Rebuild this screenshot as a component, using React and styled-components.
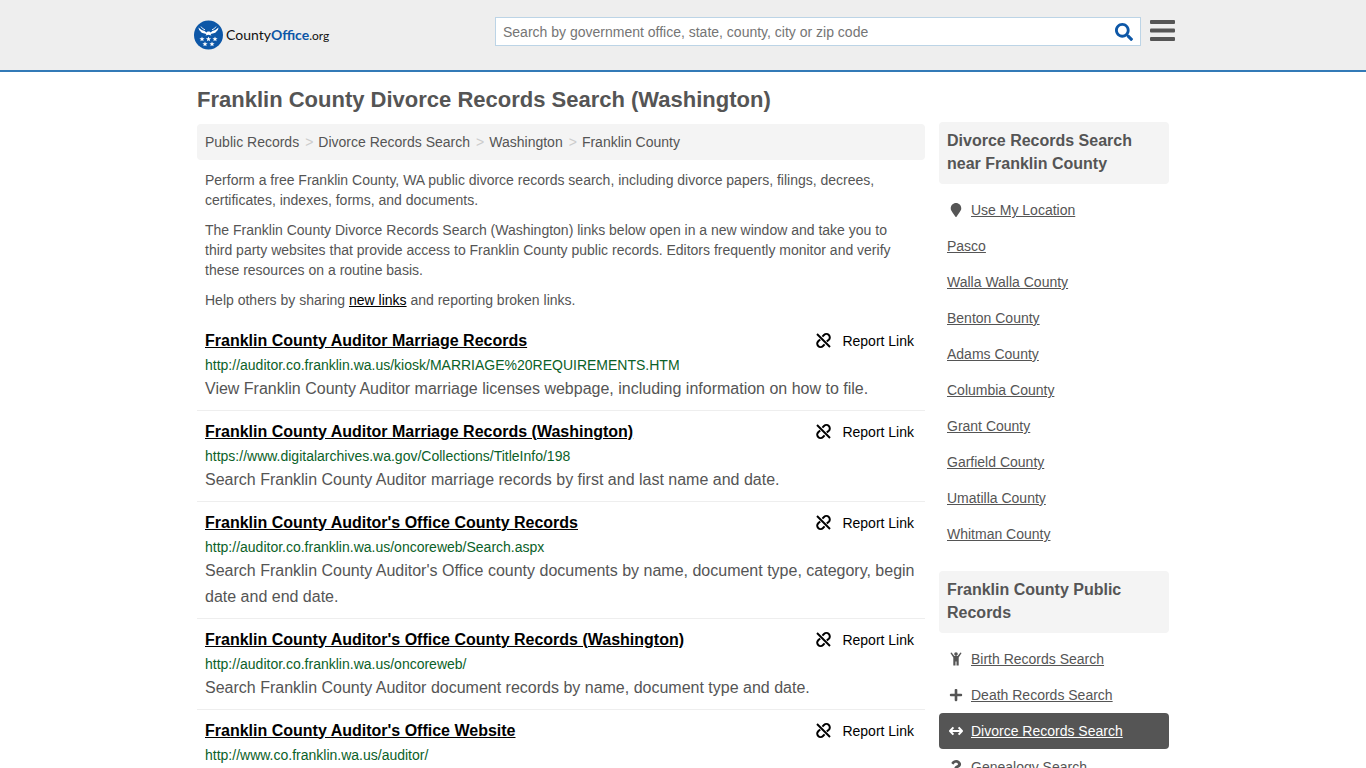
import React from 'react';
import styled, { createGlobalStyle } from 'styled-components';
import { useState } from 'react';
import { FaSearch, FaMapMarker, FaPlus, FaQuestion } from 'react-icons/fa';

const GlobalStyle = createGlobalStyle`
    * {
        box-sizing: border-box;
    }
    body {
        margin: 0;
        background-color: white;
        color: #555;
        font-family: Arial, "Liberation Sans", sans-serif;
        font-size: 14px;
        line-height: 20px;
    }
`;

const Header = styled.header`
    background-color: #eee;
    border-bottom: 2px solid #337ab7;
`;

const HeaderInner = styled.div`
    max-width: 984px;
    height: 70px;
    margin: 0 auto;
    padding-left: 3px;
    display: flex;
    align-items: flex-start;
    justify-content: space-between;
`;

const Logo = styled.a`
    display: flex;
    align-items: center;
    height: 70px;
    gap: 3px;
    color: #111;
    font-family: Lato, sans-serif;
    font-size: 14px;
    text-decoration: none;
`;

const LogoBlue = styled.b`
    color: #0d57a7;
`;

const LogoSmall = styled.span`
    font-size: 12px;
`;

const HeaderRight = styled.div`
    display: flex;
    align-items: center;
    gap: 9px;
    width: 680px;
    margin-top: 17px;
`;

const SearchForm = styled.form`
    flex: 1;
    display: flex;
    height: 29px;
    background-color: white;
    border: 1px solid #bcd4e6;
`;

const SearchInput = styled.input`
    flex: 1;
    padding: 0 7px;
    border: none;
    outline: none;
    background: none;
    font-family: inherit;
    font-size: 14px;
    color: #555;
    &::placeholder {
        color: #757575;
    }
`;

const IconButton = styled.button`
    display: flex;
    align-items: center;
    padding: ${(props) => props.$pad || "0"};
    border: none;
    background: none;
    color: ${(props) => props.$color};
    cursor: pointer;
`;

const Container = styled.div`
    max-width: 972px;
    margin: 0 auto;
`;

const Title = styled.h1`
    margin: 0;
    padding: 16px 0 12px;
    font-size: 22px;
    line-height: 24px;
`;

const Columns = styled.div`
    display: flex;
    align-items: flex-start;
    gap: 14px;
`;

const Main = styled.main`
    flex: 1;
`;

const Breadcrumb = styled.nav`
    display: flex;
    gap: 5px;
    padding: 8px;
    border-radius: 4px;
    background-color: #f4f4f4;
`;

const Crumb = styled.a`
    color: #555;
    text-decoration: none;
`;

const Separator = styled.span`
    padding-left: 1px;
    color: #ccc;
`;

const Text = styled.p`
    margin: 10px 0;
    padding: 0 8px;
`;

const DarkLink = styled.a`
    color: black;
`;

const Item = styled.article`
    padding: 8px;
    border-bottom: 1px solid #eee;
`;

const ItemTop = styled.div`
    display: flex;
    align-items: center;
    justify-content: space-between;
    height: 25px;
    padding-right: 3px;
`;

const ItemTitle = styled.a`
    color: black;
    font-size: 16px;
    font-weight: bold;
`;

const Report = styled.a`
    display: flex;
    align-items: center;
    gap: 11px;
    color: black;
    text-decoration: none;
`;

const Url = styled.div`
    padding-top: 1px;
    color: #0b6128;
    line-height: 22px;
`;

const Description = styled.div`
    font-size: 16px;
    line-height: 26px;
`;

const Sidebar = styled.aside`
    width: 230px;
    margin-top: -2px;
`;

const SideTitle = styled.h2`
    margin: 0 0 8px;
    padding: 7px 8px 9px;
    border-radius: 4px;
    background-color: #f4f4f4;
    font-size: 16px;
    line-height: 23px;
`;

const SideList = styled.div`
    margin-bottom: 19px;
`;

const SideLink = styled.a`
    display: flex;
    align-items: center;
    gap: 6px;
    padding: 8px;
    border-radius: 4px;
    color: ${(props) => (props.$active ? "white" : "#555")};
    background-color: ${(props) => (props.$active ? "#555" : "transparent")};
`;

const SideIcon = styled.span`
    display: flex;
    justify-content: center;
    width: 18px;
`;

const ChildIcon = () => (
    <svg width="12" height="14" viewBox="0 0 12 14" fill="currentColor" aria-hidden="true">
        <circle cx="6" cy="2.1" r="1.8" />
        <path d="M.4 1.1L1.6.4L4.3 3.9H7.7L10.4.4L11.6 1.1L8.7 5.6V13.4H6.5V9.6H5.5V13.4H3.3V5.6Z" />
    </svg>
);

const ArrowsIcon = () => (
    <svg width="16" height="10" viewBox="0 0 16 10" fill="none" stroke="currentColor" strokeWidth="2" aria-hidden="true">
        <path d="M2 5H14M5.4 1.4L2 5L5.4 8.6M10.6 1.4L14 5L10.6 8.6" strokeLinejoin="round" />
    </svg>
);

const UnlinkIcon = () => (
    <svg width="15" height="15" viewBox="0 0 15 15" fill="none" stroke="currentColor" strokeWidth="2" aria-hidden="true">
        <path d="M1 1L14 14" />
        <path d="M6.4 3.6L8 2A3.3 3.3 0 0 1 12.8 6.8L10.8 8.6" />
        <path d="M8.6 11.4L7 13A3.3 3.3 0 0 1 2.2 8.2L4.2 6.4" />
    </svg>
);

const links = [
    {
        title: "Franklin County Auditor Marriage Records",
        url: "http://auditor.co.franklin.wa.us/kiosk/MARRIAGE%20REQUIREMENTS.HTM",
        desc: "View Franklin County Auditor marriage licenses webpage, including information on how to file.",
    },
    {
        title: "Franklin County Auditor Marriage Records (Washington)",
        url: "https://www.digitalarchives.wa.gov/Collections/TitleInfo/198",
        desc: "Search Franklin County Auditor marriage records by first and last name and date.",
    },
    {
        title: "Franklin County Auditor's Office County Records",
        url: "http://auditor.co.franklin.wa.us/oncoreweb/Search.aspx",
        desc: "Search Franklin County Auditor's Office county documents by name, document type, category, begin date and end date.",
    },
    {
        title: "Franklin County Auditor's Office County Records (Washington)",
        url: "http://auditor.co.franklin.wa.us/oncoreweb/",
        desc: "Search Franklin County Auditor document records by name, document type and date.",
    },
    {
        title: "Franklin County Auditor's Office Website",
        url: "http://www.co.franklin.wa.us/auditor/",
    },
];

const places = [
    "Pasco",
    "Walla Walla County",
    "Benton County",
    "Adams County",
    "Columbia County",
    "Grant County",
    "Garfield County",
    "Umatilla County",
    "Whitman County",
];

const records = [
    { name: "Birth Records Search", icon: <ChildIcon /> },
    { name: "Death Records Search", icon: <FaPlus size={14} /> },
    { name: "Divorce Records Search", icon: <ArrowsIcon />, active: true },
    { name: "Genealogy Search", icon: <FaQuestion size={14} /> },
];

const star = "M0 -2.6L.7 -.8L2.6 -.8L1.1 .4L1.6 2.3L0 1.2L-1.6 2.3L-1.1 .4L-2.6 -.8L-.7 -.8Z";
const stars = [[8, 19], [14.5, 19], [21, 19], [11, 24], [18, 24]];

const LogoMark = () => (
    <svg width="29" height="30" viewBox="0 0 29 30" aria-hidden="true">
        <circle cx="14.5" cy="15" r="14.5" fill="#0d57a7" />
        <path
            fill="white"
            d="M4.4 7.4Q7.6 10.4 10.6 10.9L12.4 12.4L13.6 11.4H15.6L16.6 12.4L18.4 10.9Q21.4 10.4 24.6 7.4Q24.2 10.2 22.4 11.4Q21.6 13 19.6 13.3L16.6 14L17.4 15.6L14.5 14.8L11.6 15.6L12.4 14L9.4 13.3Q7.4 13 6.6 11.4Q4.8 10.2 4.4 7.4Z"
        />
        <path d="M7 6.6Q8.4 9 11 9.8M22 6.6Q20.6 9 18 9.8" fill="none" stroke="white" strokeWidth=".9" />
        {stars.map(([x, y]) => (
            <path key={`${x}-${y}`} d={star} transform={`translate(${x} ${y})`} fill="white" />
        ))}
    </svg>
);

const App = () => {
    const [query, setQuery] = useState("");

    return (
        <>
            <GlobalStyle />
            <Header>
                <HeaderInner>
                    <Logo href="#">
                        <LogoMark />
                        <span>County<LogoBlue>Office</LogoBlue><LogoSmall>.org</LogoSmall></span>
                    </Logo>
                    <HeaderRight>
                        <SearchForm onSubmit={(e) => e.preventDefault()}>
                            <SearchInput
                                aria-label="Search"
                                placeholder="Search by government office, state, county, city or zip code"
                                value={query}
                                onChange={(e) => setQuery(e.target.value)}
                            />
                            <IconButton $color="#0d57a7" $pad="0 7px" aria-label="Submit search">
                                <FaSearch size={18} />
                            </IconButton>
                        </SearchForm>
                        <IconButton $color="#555" $pad="0 0 2px" aria-label="Menu">
                            <svg width="25" height="21" viewBox="0 0 25 21" fill="currentColor">
                                <rect width="25" height="4" rx="1" />
                                <rect y="8.5" width="25" height="4" rx="1" />
                                <rect y="17" width="25" height="4" rx="1" />
                            </svg>
                        </IconButton>
                    </HeaderRight>
                </HeaderInner>
            </Header>
            <Container>
                <Title>Franklin County Divorce Records Search (Washington)</Title>
                <Columns>
                    <Main>
                        <Breadcrumb>
                            <Crumb href="#">Public Records</Crumb>
                            <Separator>&gt;</Separator>
                            <Crumb href="#">Divorce Records Search</Crumb>
                            <Separator>&gt;</Separator>
                            <Crumb href="#">Washington</Crumb>
                            <Separator>&gt;</Separator>
                            <Crumb href="#">Franklin County</Crumb>
                        </Breadcrumb>
                        <Text>
                            Perform a free Franklin County, WA public divorce records search, including divorce
                            papers, filings, decrees, certificates, indexes, forms, and documents.
                        </Text>
                        <Text>
                            The Franklin County Divorce Records Search (Washington) links below open in a new
                            window and take you to third party websites that provide access to Franklin County
                            public records. Editors frequently monitor and verify these resources on a routine basis.
                        </Text>
                        <Text>
                            Help others by sharing <DarkLink href="#">new links</DarkLink> and reporting broken links.
                        </Text>
                        {links.map((link) => (
                            <Item key={link.title}>
                                <ItemTop>
                                    <ItemTitle href="#">{link.title}</ItemTitle>
                                    <Report href="#"><UnlinkIcon />Report Link</Report>
                                </ItemTop>
                                <Url>{link.url}</Url>
                                {link.desc && <Description>{link.desc}</Description>}
                            </Item>
                        ))}
                    </Main>
                    <Sidebar>
                        <SideTitle>Divorce Records Search near Franklin County</SideTitle>
                        <SideList>
                            <SideLink href="#">
                                <SideIcon><FaMapMarker size={14} /></SideIcon>Use My Location
                            </SideLink>
                            {places.map((place) => (
                                <SideLink href="#" key={place}>{place}</SideLink>
                            ))}
                        </SideList>
                        <SideTitle>Franklin County Public Records</SideTitle>
                        <SideList>
                            {records.map((record) => (
                                <SideLink href="#" key={record.name} $active={record.active}>
                                    <SideIcon>{record.icon}</SideIcon>{record.name}
                                </SideLink>
                            ))}
                        </SideList>
                    </Sidebar>
                </Columns>
            </Container>
        </>
    );
}

export default App
